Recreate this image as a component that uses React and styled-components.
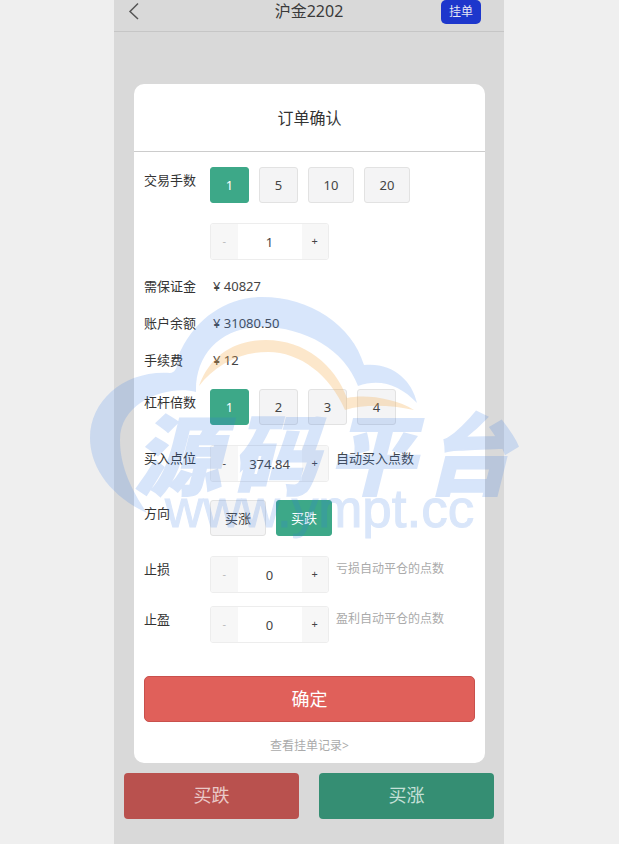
import React from "react";
import styled, { createGlobalStyle } from "styled-components";

const GlobalStyle = createGlobalStyle`
	html, body {
		margin: 0;
		height: 100%;
		overflow: hidden;
		background-color: #efefef;
		font-family: "Noto Sans", "Noto Sans CJK SC", sans-serif;
	}
`;

const Page = styled.div`
	position: relative;
	height: 844px;
	overflow: hidden;
`;
const Phone = styled.div`
	width: 390px;
	height: 844px;
	margin-left: 114px;
	background-color: #d9d9d9;
	display: flex;
	flex-direction: column;
	align-items: flex-start;
`;
const Header = styled.div`
	width: 100%;
	height: 32px;
	flex-shrink: 0;
	box-sizing: border-box;
	border-bottom: 1px solid #c6c6c6;
	display: flex;
	align-items: flex-start;
	justify-content: space-between;
	padding: 0 23px 0 14px;
	position: relative;
`;
const BackIcon = styled.svg`
	width: 12px;
	height: 18px;
	margin-top: 2px;
`;
const HeaderTitle = styled.div`
	position: absolute;
	left: 0;
	right: 0;
	top: 0;
	line-height: 23px;
	text-align: center;
	font-size: 16px;
	color: #3a3a3a;
`;
const PendingButton = styled.div`
	width: 40px;
	height: 24px;
	border-radius: 5px;
	background-color: #1d37cc;
	color: #e8e8f4;
	font-size: 12px;
	line-height: 24px;
	text-align: center;
`;
const Modal = styled.div`
	width: 351px;
	height: 679px;
	margin: 52px 0 0 20px;
	flex-shrink: 0;
	background-color: #fff;
	border-radius: 10px;
	display: flex;
	flex-direction: column;
`;
const ModalTitle = styled.div`
	height: 67px;
	line-height: 68px;
	text-align: center;
	font-size: 16px;
	color: #333;
	border-bottom: 1px solid #ccc;
`;
const Form = styled.div`
	padding: 15px 10px 0;
	display: flex;
	flex-direction: column;
`;
const Row = styled.div`
	display: flex;
	align-items: flex-start;
	margin-top: ${(props) => props.top ?? 0}px;
	margin-bottom: ${(props) => props.gap ?? 20}px;
`;
const Label = styled.div`
	width: 66px;
	flex-shrink: 0;
	font-size: 13px;
	line-height: 18px;
	padding-top: 4px;
	color: #333;
`;
const Choices = styled.div`
	display: flex;
	gap: 10px;
`;
const Choice = styled.div`
	width: ${(props) => props.width ?? 39}px;
	height: 36px;
	box-sizing: border-box;
	border-radius: 3px;
	border: 1px solid ${(props) => (props.active ? "#3da888" : "#e2e2e2")};
	background-color: ${(props) => (props.active ? "#3da888" : "#f4f4f5")};
	color: ${(props) => (props.active ? "#fff" : "#444")};
	font-size: 13px;
	line-height: 34px;
	text-align: center;
`;
const Stepper = styled.div`
	width: 119px;
	height: 37px;
	box-sizing: border-box;
	border: 1px solid #ededed;
	border-radius: 3px;
	display: flex;
	overflow: hidden;
`;
const StepButton = styled.div`
	flex: 1;
	background-color: #f7f7f7;
	color: ${(props) => (props.muted ? "#bbb" : "#444")};
	font-size: 11px;
	line-height: 34px;
	text-align: center;
`;
const StepValue = styled.div`
	width: 64px;
	color: #444;
	font-size: 13px;
	line-height: 36px;
	text-align: center;
`;
const Hint = styled.div`
	margin-left: 7px;
	padding-top: 4px;
	font-size: ${(props) => (props.dark ? 13 : 12)}px;
	line-height: 18px;
	color: ${(props) => (props.dark ? "#444" : "#aaa")};
`;
const InfoRow = styled.div`
	display: flex;
	height: 37px;
	box-sizing: border-box;
	padding-bottom: 2px;
	align-items: center;
	font-size: 13px;
	color: #444;
`;
const InfoLabel = styled.div`
	width: 69px;
	flex-shrink: 0;
	color: #333;
`;
const ConfirmButton = styled.div`
	height: 46px;
	margin-top: 13px;
	box-sizing: border-box;
	border: 1px solid #c9504c;
	border-radius: 5px;
	background-color: #e0605a;
	color: #fff;
	font-size: 18px;
	line-height: 44px;
	text-align: center;
`;
const RecordLink = styled.div`
	margin-top: 15px;
	text-align: center;
	font-size: 12px;
	line-height: 18px;
	color: #aaa;
`;
const Footer = styled.div`
	width: 370px;
	margin: 10px 0 0 10px;
	display: flex;
	justify-content: space-between;
`;
const FooterButton = styled.div`
	width: 175px;
	height: 46px;
	box-sizing: border-box;
	border-radius: 4px;
	background-color: ${(props) => (props.down ? "#b9514e" : "#358e73")};
	color: ${(props) => (props.down ? "#eac9c8" : "#c5e0d8")};
	font-size: 18px;
	line-height: 44px;
	text-align: center;
`;

// watermark laid over the whole page
const Watermark = styled.div`
	position: absolute;
	inset: 0;
	pointer-events: none;
`;
const CloudArt = styled.svg`
	position: absolute;
	left: 0;
	top: 0;
	width: 619px;
	height: 844px;
`;
const MarkTitle = styled.div`
	position: absolute;
	left: 134px;
	top: 399px;
	font-family: "Noto Sans CJK SC", sans-serif;
	font-size: 87px;
	line-height: 102px;
	font-weight: 900;
	font-style: italic;
	letter-spacing: 10px;
	white-space: nowrap;
	color: rgb(50, 120, 230);
	-webkit-text-stroke: 1.5px rgb(50, 120, 230);
	opacity: 0.19;
`;
const MarkUrl = styled.div`
	position: absolute;
	left: 165px;
	top: 478px;
	font-family: "Liberation Sans", sans-serif;
	font-size: 53px;
	line-height: 62px;
	white-space: nowrap;
	color: rgb(50, 120, 230);
	-webkit-text-stroke: 1px rgb(50, 120, 230);
	opacity: 0.18;
`;

function NumberStepper({ value, muted = true }) {
	return (
		<Stepper>
			<StepButton muted={muted}>-</StepButton>
			<StepValue>{value}</StepValue>
			<StepButton>+</StepButton>
		</Stepper>
	);
}

export default function App() {
	return (
		<Page>
			<GlobalStyle />
			<Phone>
				<Header>
					<BackIcon viewBox="0 0 12 18">
						<path d="M10 1.5 L2 9.5 L10 17" fill="none" stroke="#555" strokeWidth="1.5" />
					</BackIcon>
					<HeaderTitle>沪金2202</HeaderTitle>
					<PendingButton>挂单</PendingButton>
				</Header>
				<Modal>
					<ModalTitle>订单确认</ModalTitle>
					<Form>
						<Row>
							<Label>交易手数</Label>
							<Choices>
								<Choice active>1</Choice>
								<Choice>5</Choice>
								<Choice width={46}>10</Choice>
								<Choice width={46}>20</Choice>
							</Choices>
						</Row>
						<Row gap={8}>
							<Label />
							<NumberStepper value="1" />
						</Row>
						<InfoRow>
							<InfoLabel>需保证金</InfoLabel>¥ 40827
						</InfoRow>
						<InfoRow>
							<InfoLabel>账户余额</InfoLabel>¥ 31080.50
						</InfoRow>
						<InfoRow>
							<InfoLabel>手续费</InfoLabel>¥ 12
						</InfoRow>
						<Row top={10}>
							<Label>杠杆倍数</Label>
							<Choices>
								<Choice active>1</Choice>
								<Choice>2</Choice>
								<Choice>3</Choice>
								<Choice>4</Choice>
							</Choices>
						</Row>
						<Row gap={18}>
							<Label>买入点位</Label>
							<NumberStepper value="374.84" muted={false} />
							<Hint dark>自动买入点数</Hint>
						</Row>
						<Row>
							<Label>方向</Label>
							<Choices>
								<Choice width={56}>买涨</Choice>
								<Choice width={56} active>买跌</Choice>
							</Choices>
						</Row>
						<Row gap={13}>
							<Label>止损</Label>
							<NumberStepper value="0" />
							<Hint>亏损自动平仓的点数</Hint>
						</Row>
						<Row gap={20}>
							<Label>止盈</Label>
							<NumberStepper value="0" />
							<Hint>盈利自动平仓的点数</Hint>
						</Row>
						<ConfirmButton>确定</ConfirmButton>
						<RecordLink>查看挂单记录&gt;</RecordLink>
					</Form>
				</Modal>
				<Footer>
					<FooterButton down>买跌</FooterButton>
					<FooterButton>买涨</FooterButton>
				</Footer>
			</Phone>
			<Watermark>
				<CloudArt viewBox="0 0 619 844">
					<path
						d="M147 513 C108 495 90 465 90 438 C90 400 125 370 170 373 C180 372 176 358 181 350 C198 315 230 297 262 297 C310 297 352 325 364 365 C392 362 412 380 417 403 C400 385 380 378 358 386 C345 350 305 327 262 327 C220 327 195 355 196 392 C170 385 120 400 120 440 C120 470 135 495 147 513 Z"
						fill="rgba(60, 130, 235, 0.2)"
					/>
					<path
						d="M199 386 C210 355 235 340 266 340 C305 340 335 365 347 398 C365 394 395 398 414 410 C390 405 365 404 345 410 C330 375 300 352 268 352 C240 352 215 365 199 386 Z"
						fill="rgba(245, 170, 70, 0.28)"
					/>
				</CloudArt>
				<MarkTitle>源码平台</MarkTitle>
				<MarkUrl>www.ympt.cc</MarkUrl>
			</Watermark>
		</Page>
	);
}
